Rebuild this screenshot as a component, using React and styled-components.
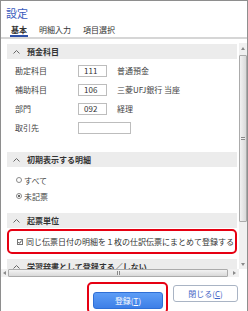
import React from "react";
import styled, { createGlobalStyle } from "styled-components";

const GlobalStyle = createGlobalStyle`
  html, body { margin: 0; padding: 0; background: #fff; }
  body {
    font-family: "Noto Sans CJK JP", "Noto Sans", sans-serif;
    color: #333;
  }
  * { box-sizing: border-box; }
`;

const Window = styled.div`
  width: 248px;
  height: 311px;
  border: 1px solid #8e8e8e;
  border-bottom: none;
  display: flex;
  flex-direction: column;
  overflow: hidden;
  background: #fff;
`;

const Title = styled.h1`
  margin: 0;
  padding: 4px 0 0 5px;
  height: 22px;
  font-size: 11px;
  line-height: 16px;
  font-weight: normal;
  color: #3a5bbd;
`;

const Tabs = styled.div`
  display: flex;
  align-items: flex-start;
  gap: 10px;
  height: 19px;
  padding-left: 9px;
  border-bottom: 2px solid #d6d6d6;
`;

const Tab = styled.div`
  padding: 3px 1px 0;
  font-size: 8px;
  line-height: 11px;
  font-weight: ${(p) => (p.$active ? "bold" : "normal")};
  color: #333;
  border-bottom: 2px solid ${(p) => (p.$active ? "#2c4fa8" : "transparent")};
`;

const Pane = styled.div`
  margin-top: 4px;
  display: flex;
  flex-direction: column;
`;

const PaneBody = styled.div`
  display: flex;
  height: 226px;
`;

const Content = styled.div`
  flex: 1;
  overflow: hidden;
  padding: 1px 2px 0 6px;
`;

const SectionHeader = styled.div`
  display: flex;
  align-items: center;
  gap: 7px;
  height: 15px;
  margin-top: ${(p) => p.$gap || 0}px;
  padding-left: 6px;
  background: #ececec;
  font-size: 8px;
  font-weight: bold;
  color: #333;
  white-space: nowrap;
`;

const Fields = styled.div`
  display: grid;
  grid-template-columns: 53px 29px auto;
  column-gap: 10px;
  row-gap: 6px;
  padding: 5px 0 0 8px;
  grid-auto-rows: 13px;
  align-items: center;
  font-size: 8px;
`;

const Label = styled.span`
  color: #444;
`;

const Input = styled.div`
  grid-column: ${(p) => (p.$wide ? "2 / span 2" : "auto")};
  width: ${(p) => (p.$wide ? 53 : 29)}px;
  height: 12px;
  border: 1px solid #bdbdbd;
  padding-left: 5px;
  font-size: 8px;
  line-height: 10px;
  color: #333;
`;

const Value = styled.span`
  color: #444;
  white-space: nowrap;
`;

const Choices = styled.div`
  padding: 5px 0 0 9px;
  display: flex;
  flex-direction: column;
`;

const Choice = styled.label`
  display: flex;
  align-items: center;
  gap: 2px;
  height: 16px;
  font-size: 8px;
  color: #444;
`;

const Radio = styled.span`
  width: 6px;
  height: 6px;
  border-radius: 50%;
  border: 1px solid #8a8a8a;
  display: flex;
  align-items: center;
  justify-content: center;
  &::after {
    content: "";
    width: 2px;
    height: 2px;
    border-radius: 50%;
    background: ${(p) => (p.$checked ? "#333" : "transparent")};
  }
`;

const Highlight = styled.div`
  border: 2px solid #e60012;
  border-radius: 5px;
`;

const CheckRow = styled(Highlight)`
  margin-top: 1px;
  height: 25px;
  display: flex;
  align-items: center;
  gap: 3px;
  padding-left: 8px;
  font-size: 8px;
  color: #333;
  white-space: nowrap;
`;

const CheckBox = styled.span`
  width: 6px;
  height: 6px;
  border: 1px solid #777;
  display: flex;
  align-items: center;
  justify-content: center;
`;

const VScroll = styled.div`
  width: 8px;
  display: flex;
  flex-direction: column;
  background: #f0f0f0;
`;

const Arrow = styled.div`
  display: flex;
  align-items: center;
  justify-content: center;
  width: ${(p) => p.$w || 8}px;
  height: ${(p) => p.$h || 8}px;
  flex-shrink: 0;
`;

const VThumb = styled.div`
  margin: 1px 0 0;
  height: 167px;
  border: 1px solid #ababab;
  border-radius: 1px;
  background: linear-gradient(to right, #f2f2f2, #d9d9d9);
  display: flex;
  align-items: center;
  justify-content: center;
`;

const Spacer = styled.div`
  flex: 1;
`;

const HScrollRow = styled.div`
  display: flex;
  height: 8px;
`;

const HScroll = styled.div`
  flex: 1;
  display: flex;
  align-items: stretch;
  background: #f0f0f0;
`;

const HThumb = styled.div`
  width: 220px;
  border: 1px solid #ababab;
  border-radius: 1px;
  background: linear-gradient(to bottom, #f2f2f2, #d9d9d9);
  display: flex;
  align-items: center;
  justify-content: center;
`;

const Corner = styled.div`
  width: 8px;
  background: #fff;
`;

const Footer = styled.div`
  flex: 1;
  display: flex;
  justify-content: flex-end;
  align-items: flex-start;
  gap: 5px;
  padding: 5px 9px 0 0;
`;

const ButtonFrame = styled(Highlight)`
  padding: 1px 3px 3px 4px;
`;

const Button = styled.button`
  width: ${(p) => (p.$primary ? 70 : 65)}px;
  height: 17px;
  margin-top: ${(p) => (p.$primary ? 0 : 3)}px;
  padding: 0;
  border-radius: 3px;
  font-family: inherit;
  font-size: 8px;
  line-height: 15px;
  border: 1px solid ${(p) => (p.$primary ? "#2f6fd6" : "#a9b4c4")};
  background: ${(p) =>
    p.$primary ? "linear-gradient(to bottom, #5d9df6, #3e7fe7)" : "#fff"};
  color: ${(p) => (p.$primary ? "#fff" : "#3f63c6")};
  u { text-decoration: underline; }
`;

const Chevron = () => (
  <svg width="7" height="4" viewBox="0 0 7 4">
    <polyline points="0.5,3.5 3.5,0.5 6.5,3.5" fill="none" stroke="#666" strokeWidth="1" />
  </svg>
);

const Tri = ({ dir }) => {
  const pts = {
    up: "0,3 2,0 4,3",
    down: "0,0 2,3 4,0",
    left: "3,0 0,2 3,4",
    right: "0,0 3,2 0,4",
  }[dir];
  const w = dir === "up" || dir === "down" ? 4 : 3;
  const h = dir === "up" || dir === "down" ? 3 : 4;
  return (
    <svg width={w} height={h} viewBox={`0 0 ${w} ${h}`}>
      <polygon points={pts} fill="#8a8a8a" />
    </svg>
  );
};

const Grip = ({ vertical }) => (
  <svg width={vertical ? 4 : 3} height={vertical ? 3 : 4}>
    {[0, 1, 2].map((i) =>
      vertical ? (
        <line key={i} x1="0" x2="4" y1={i + 0.5} y2={i + 0.5} stroke={i % 2 ? "#eee" : "#888"} />
      ) : (
        <line key={i} y1="0" y2="4" x1={i + 0.5} x2={i + 0.5} stroke={i % 2 ? "#eee" : "#888"} />
      )
    )}
  </svg>
);

const fields = [
  { label: "勘定科目", code: "111", value: "普通預金" },
  { label: "補助科目", code: "106", value: "三菱UFJ銀行 当座" },
  { label: "部門", code: "092", value: "経理" },
];

export default function App() {
  return (
    <>
      <GlobalStyle />
      <Window>
        <Title>設定</Title>
        <Tabs>
          <Tab $active>基本</Tab>
          <Tab>明細入力</Tab>
          <Tab>項目選択</Tab>
        </Tabs>
        <Pane>
          <PaneBody>
            <Content>
              <SectionHeader>
                <Chevron />
                預金科目
              </SectionHeader>
              <Fields>
                {fields.map((f) => (
                  <React.Fragment key={f.label}>
                    <Label>{f.label}</Label>
                    <Input>{f.code}</Input>
                    <Value>{f.value}</Value>
                  </React.Fragment>
                ))}
                <Label>取引先</Label>
                <Input $wide />
              </Fields>

              <SectionHeader $gap={18}>
                <Chevron />
                初期表示する明細
              </SectionHeader>
              <Choices>
                <Choice>
                  <Radio />
                  すべて
                </Choice>
                <Choice>
                  <Radio $checked />
                  未記票
                </Choice>
              </Choices>

              <SectionHeader $gap={9}>
                <Chevron />
                起票単位
              </SectionHeader>
              <CheckRow>
                <CheckBox>
                  <svg width="4" height="4" viewBox="0 0 4 4">
                    <polyline points="0.3,2 1.5,3.3 3.7,0.5" fill="none" stroke="#333" strokeWidth="0.9" />
                  </svg>
                </CheckBox>
                同じ伝票日付の明細を１枚の仕訳伝票にまとめて登録する
              </CheckRow>

              <SectionHeader $gap={5}>
                <Chevron />
                学習辞書として登録する／しない
              </SectionHeader>
            </Content>
            <VScroll>
              <Arrow $h={11}>
                <Tri dir="up" />
              </Arrow>
              <VThumb>
                <Grip vertical />
              </VThumb>
              <Spacer />
              <Arrow $h={9}>
                <Tri dir="down" />
              </Arrow>
            </VScroll>
          </PaneBody>
          <HScrollRow>
            <HScroll>
              <Arrow $w={7}>
                <Tri dir="left" />
              </Arrow>
              <HThumb>
                <Grip />
              </HThumb>
              <Spacer />
              <Arrow $w={9}>
                <Tri dir="right" />
              </Arrow>
            </HScroll>
            <Corner />
          </HScrollRow>
        </Pane>
        <Footer>
          <ButtonFrame>
            <Button $primary>
              登録(<u>T</u>)
            </Button>
          </ButtonFrame>
          <Button>
            閉じる(<u>C</u>)
          </Button>
        </Footer>
      </Window>
    </>
  );
}
